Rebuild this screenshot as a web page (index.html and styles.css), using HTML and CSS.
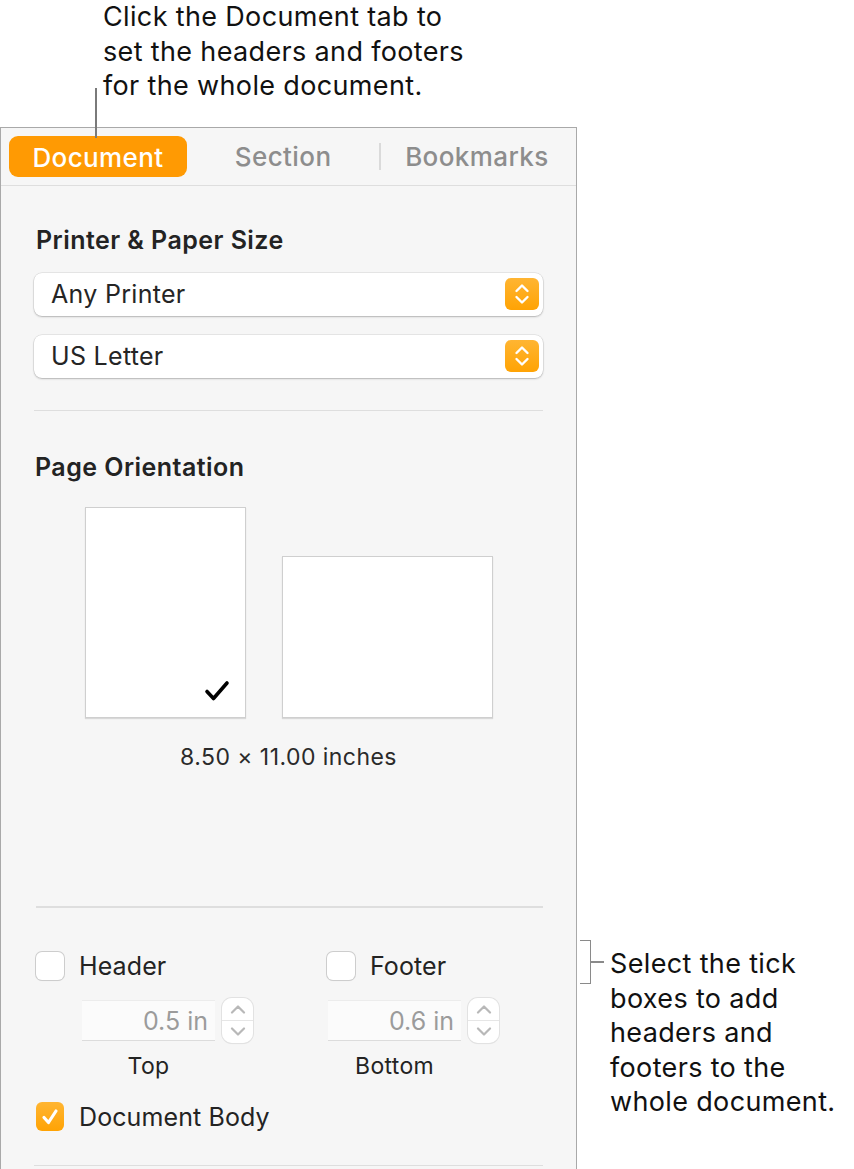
FILE: index.html
```html
<!DOCTYPE html>
<html>
<head>
<meta name="viewport" content="width=device-width, initial-scale=1">
<link rel="stylesheet" href="styles.css">
</head>
<body>

<div class="figure">
    <!-- callout for the tab -->
    <p class="note note-top">Click the Document tab to<br>set the headers and footers<br>for the whole document.</p>
    <span class="leader"></span>

    <div class="panel">
        <div class="tabs">
            <span class="tab tab-active">Document</span>
            <span class="tab">Section</span>
            <span class="tab-sep"></span>
            <span class="tab">Bookmarks</span>
        </div>

        <div class="content">
            <h3 class="heading heading-first">Printer &amp; Paper Size</h3>
            <div class="popup">
                <span>Any Printer</span>
                <span class="popup-arrows">
                    <svg width="18" height="24" viewBox="0 0 18 24"><path d="M3.5 9 L9 3.5 L14.5 9 M3.5 15 L9 20.5 L14.5 15" fill="none" stroke="#fff" stroke-width="2.4" stroke-linecap="round" stroke-linejoin="round"/></svg>
                </span>
            </div>
            <div class="popup">
                <span>US Letter</span>
                <span class="popup-arrows">
                    <svg width="18" height="24" viewBox="0 0 18 24"><path d="M3.5 9 L9 3.5 L14.5 9 M3.5 15 L9 20.5 L14.5 15" fill="none" stroke="#fff" stroke-width="2.4" stroke-linecap="round" stroke-linejoin="round"/></svg>
                </span>
            </div>

            <div class="rule rule-printer"></div>

            <h3 class="heading heading-orient">Page Orientation</h3>
            <div class="orient">
                <div class="page page-portrait">
                    <svg width="26" height="22" viewBox="0 0 26 22"><path d="M3 11.5 L9.5 18.5 L23 3" fill="none" stroke="#000" stroke-width="3.6" stroke-linecap="round" stroke-linejoin="round"/></svg>
                </div>
                <div class="page page-landscape"></div>
            </div>
            <p class="size">8.50 × 11.00 inches</p>

            <div class="rule rule-size"></div>

            <div class="hf">
                <div class="hf-col">
                    <label class="check"><span class="box"></span>Header</label>
                    <div class="field field-top">
                        <div class="field-row">
                            <span class="input">0.5 in</span>
                            <span class="stepper">
                                <svg width="20" height="45" viewBox="0 0 20 45"><path d="M4 14.5 L10 8.5 L16 14.5 M4 30.5 L10 36.5 L16 30.5" fill="none" stroke="#b8b8b8" stroke-width="2.2" stroke-linecap="round" stroke-linejoin="round"/></svg>
                            </span>
                        </div>
                        <span class="field-label">Top</span>
                    </div>
                </div>
                <div class="hf-col">
                    <label class="check"><span class="box"></span>Footer</label>
                    <div class="field field-bottom">
                        <div class="field-row">
                            <span class="input">0.6 in</span>
                            <span class="stepper">
                                <svg width="20" height="45" viewBox="0 0 20 45"><path d="M4 14.5 L10 8.5 L16 14.5 M4 30.5 L10 36.5 L16 30.5" fill="none" stroke="#b8b8b8" stroke-width="2.2" stroke-linecap="round" stroke-linejoin="round"/></svg>
                            </span>
                        </div>
                        <span class="field-label">Bottom</span>
                    </div>
                </div>
            </div>

            <label class="check check-body">
                <span class="box box-on">
                    <svg width="22" height="22" viewBox="0 0 22 22"><path d="M5 11.5 L9.5 16.5 L17 5" fill="none" stroke="#fff" stroke-width="3.2" stroke-linecap="round" stroke-linejoin="round"/></svg>
                </span>Document Body</label>

            <div class="rule rule-body"></div>
        </div>
    </div>

    <!-- callout for the tick boxes -->
    <div class="note-side">
        <span class="bracket"></span>
        <p class="note">Select the tick<br>boxes to add<br>headers and<br>footers to the<br>whole document.</p>
    </div>
</div>

</body>
</html>
```

FILE: styles.css
```css
/* Page */
body {
    margin: 0;
    background: #fff;
    font-family: Inter, "Noto Sans", sans-serif;
    color: #222;
}

* {
    box-sizing: border-box;
}

.figure {
    position: relative;
    width: 854px;
    height: 1169px;
    overflow: hidden;
}

/* Callout text */
.note {
    margin: 0;
    font-size: 27px;
    line-height: 34.5px;
    color: #111;
    letter-spacing: 0.35px;
}

.note-top {
    padding: 0 0 0 103px;
    margin-bottom: 23px;
}

.leader {
    position: absolute;
    left: 95px;
    top: 88px;
    width: 1.5px;
    height: 50px;
    background: #7a7a7a;
    z-index: 2;
}

/* Inspector panel */
.panel {
    width: 577px;
    height: 1060px;
    background: #f6f6f6;
    border: 1.5px solid #a9a9a9;
    border-bottom: none;
}

.tabs {
    display: flex;
    align-items: center;
    height: 58px;
    padding: 1px 3px 0 8px;
    border-bottom: 1.5px solid #dedede;
}

.tab {
    flex: 1;
    text-align: center;
    font-size: 26px;
    font-weight: 500;
    letter-spacing: 0.4px;
    color: #8d8d8d;
}

.tab-active {
    flex: none;
    width: 178px;
    height: 41px;
    line-height: 43px;
    border-radius: 9px;
    background: #ff9a03;
    color: #fff;
}

.tab-sep {
    width: 1.5px;
    height: 27px;
    background: #dadada;
}

.content {
    padding: 0 33px 0 33px;
}

.heading {
    margin: 0;
    font-size: 25px;
    line-height: 28px;
    font-weight: 600;
    letter-spacing: 0.45px;
    color: #232323;
}

.heading-first {
    margin: 40px 0 19px 2px;
}

.heading-orient {
    margin: 42px 0 26px 1px;
}

/* Popup buttons */
.popup {
    display: flex;
    align-items: center;
    justify-content: space-between;
    height: 43px;
    margin-bottom: 19px;
    padding: 0 4px 0 17px;
    background: #fff;
    border-radius: 8px;
    box-shadow: 0 0 0 0.5px rgba(0, 0, 0, 0.12), 0 1px 2px rgba(0, 0, 0, 0.22);
    font-size: 25px;
    letter-spacing: 0.3px;
    color: #252525;
}

.popup-arrows {
    display: flex;
    align-items: center;
    justify-content: center;
    width: 34px;
    height: 32px;
    border-radius: 6px;
    background: linear-gradient(#ffb532, #ffa304);
}

.rule {
    height: 1.5px;
    background: #dedede;
}

.rule-printer {
    margin-top: 32px;
}

.rule-size {
    margin: 135px 0 0 2px;
}

.rule-body {
    margin-top: 34px;
}

/* Orientation pages */
.orient {
    display: flex;
    align-items: flex-end;
    gap: 36px;
    padding-left: 51px;
}

.page {
    background: #fff;
    border: 1px solid #cfcfcf;
    box-shadow: 0 1px 1px rgba(0, 0, 0, 0.12);
}

.page-portrait {
    display: flex;
    align-items: flex-end;
    justify-content: flex-end;
    width: 161px;
    height: 211px;
    padding: 0 15px 15px 0;
}

.page-landscape {
    width: 211px;
    height: 162px;
}

.size {
    margin: 25px 0 0 0;
    text-align: center;
    font-size: 23px;
    line-height: 28px;
    letter-spacing: 0.45px;
    color: #2a2a2a;
}

/* Header and footer */
.hf {
    display: grid;
    grid-template-columns: 293px 1fr;
    margin-top: 44px;
}

.check {
    display: flex;
    align-items: center;
    gap: 15px;
    height: 28px;
    font-size: 25px;
    letter-spacing: 0.1px;
    color: #232323;
}

.box {
    display: flex;
    align-items: center;
    justify-content: center;
    width: 28px;
    height: 28px;
    border-radius: 6px;
    background: #fff;
    box-shadow: 0 0 0 1px #cdcdcd, 0 1px 1px rgba(0, 0, 0, 0.08);
}

.box-on {
    height: 29px;
    background: linear-gradient(#ffb532, #ffa304);
    box-shadow: none;
}

.check-body {
    margin-top: 23px;
    padding-left: 2px;
}

.hf .check {
    padding-left: 2px;
}

.hf-col + .hf-col .check {
    padding-left: 0;
}

.field {
    display: flex;
    flex-direction: column;
    align-items: flex-start;
    margin-top: 18px;
}

.field-top {
    margin-left: 48px;
}

.field-bottom {
    margin-left: 1px;
}

.field-row {
    display: flex;
    align-items: center;
    gap: 7px;
}

.input {
    width: 133px;
    height: 41px;
    line-height: 41px;
    padding-right: 7px;
    text-align: right;
    font-size: 25px;
    color: #9b9b9b;
    background: #fbfbfb;
    border-top: 1px solid #ececec;
    border-bottom: 1.5px solid #dcdcdc;
}

.stepper {
    display: flex;
    align-items: center;
    justify-content: center;
    width: 31px;
    height: 45px;
    border-radius: 10px;
    background: linear-gradient(#fff 0, #fff 48%, #e6e6e6 48%, #e6e6e6 52%, #fff 52%);
    box-shadow: 0 0 0 1px #e2e2e2, 0 1px 1px rgba(0, 0, 0, 0.08);
}

.field-label {
    width: 133px;
    margin-top: 9px;
    text-align: center;
    font-size: 23px;
    line-height: 28px;
    letter-spacing: 0.3px;
    color: #232323;
}

/* Side callout */
.note-side {
    position: absolute;
    left: 580px;
    top: 947px;
    padding-left: 30px;
}

.bracket {
    position: absolute;
    left: 0;
    top: -7px;
    width: 11px;
    height: 44px;
    border: 1.5px solid #8a8a8a;
    border-left: none;
}

.bracket::after {
    content: "";
    position: absolute;
    left: 10px;
    top: 20px;
    width: 14px;
    height: 1.5px;
    background: #8a8a8a;
}
```
